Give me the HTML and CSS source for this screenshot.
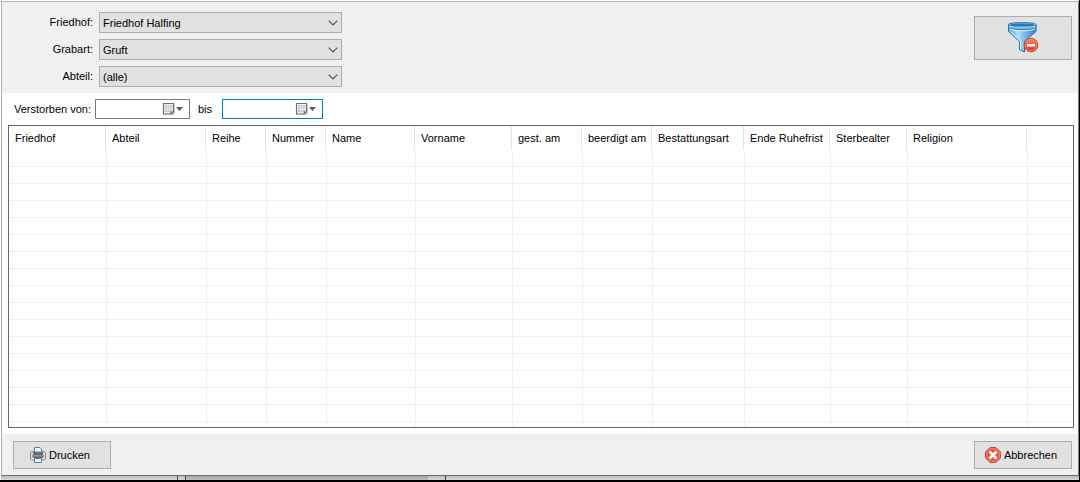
FILE: index.html
```html
<!DOCTYPE html>
<html lang="de">
<head>
<meta charset="utf-8">
<title>Friedhof</title>
<link rel="stylesheet" href="styles.css">
</head>
<body>
<div class="window">
  <header class="filters">
    <div class="fields">
      <label for="friedhof">Friedhof:</label>
      <div class="combo">
        <select id="friedhof"><option>Friedhof Halfing</option></select>
        <svg class="chevron" viewBox="0 0 10 6"><path d="M.7.7 5 5 9.3.7"/></svg>
      </div>
      <label for="grabart">Grabart:</label>
      <div class="combo">
        <select id="grabart"><option>Gruft</option></select>
        <svg class="chevron" viewBox="0 0 10 6"><path d="M.7.7 5 5 9.3.7"/></svg>
      </div>
      <label for="abteil">Abteil:</label>
      <div class="combo">
        <select id="abteil"><option>(alle)</option></select>
        <svg class="chevron" viewBox="0 0 10 6"><path d="M.7.7 5 5 9.3.7"/></svg>
      </div>
    </div>
    <button class="button reset" type="button" aria-label="Filter entfernen">
      <svg width="32" height="32" viewBox="0 0 32 32">
        <defs>
          <linearGradient id="cone" x1="0" x2="1"><stop offset="0" stop-color="#4d9fd6"/><stop offset=".35" stop-color="#b5dff8"/><stop offset=".6" stop-color="#74b9e6"/><stop offset="1" stop-color="#3585c4"/></linearGradient>
          <linearGradient id="minus" x1="0" x2="0" y1="0" y2="1"><stop offset="0" stop-color="#ff8468"/><stop offset="1" stop-color="#dd3018"/></linearGradient>
        </defs>
        <path d="M1.500 4v6.500L12.500 20.500v8l5 2.500V20.500L29 10.500V4z" fill="url(#cone)" stroke="#2877b5"/>
        <path d="M3 10.500 13.500 20v8.500" fill="none" stroke="#d5effc"/>
        <path d="M1.500 3.500C1.500 1 29 1 29 3.500V6.500C29 9 1.500 9 1.500 6.500z" fill="#86c6ee" stroke="#2472ad"/>
        <ellipse cx="15.200" cy="4" rx="12.500" ry="1.600" fill="#2f78b0"/>
        <path d="M2.500 8C9 10.500 22 10.500 28 8" fill="none" stroke="#d9f1fd"/>
        <circle cx="24" cy="24" r="6.800" fill="url(#minus)" stroke="#c33b27"/>
        <circle cx="24" cy="24" r="5.800" fill="none" stroke="#ff9a82" stroke-width=".7"/>
        <path d="M20 23h8v2.500h-8z" fill="#fff"/>
      </svg>
    </button>
  </header>

  <main class="content">
    <div class="dates">
      <label for="von">Verstorben von:</label>
      <div class="date date-from">
        <input id="von" type="text">
        <button type="button" aria-label="Kalender">
          <svg width="22" height="14" viewBox="0 0 22 14"><path d="M2.500 2.500h10.500v9l-1.500 1.500h-9z" fill="#aaa" opacity=".5"/><path d="M1.500 1.500h10v8.500l-2 2h-8z" fill="#f4f4f6" stroke="#786b6b" stroke-width="1.200"/><path d="M3 3h7v7H3z" fill="#b9c3cf"/><path d="M3 5.200h7M3 7.500h7M5.200 3v7M7.700 3v7" stroke="#f0f3f6" stroke-width=".7"/><path d="M8.500 12V9.500h3z" fill="#786b6b"/><path d="M14 5h7l-3.500 4z" fill="#49597d"/></svg>
        </button>
      </div>
      <label class="until" for="bis">bis</label>
      <div class="date date-to">
        <input id="bis" type="text">
        <button type="button" aria-label="Kalender">
          <svg width="22" height="14" viewBox="0 0 22 14"><path d="M2.500 2.500h10.500v9l-1.500 1.500h-9z" fill="#aaa" opacity=".5"/><path d="M1.500 1.500h10v8.500l-2 2h-8z" fill="#f4f4f6" stroke="#786b6b" stroke-width="1.200"/><path d="M3 3h7v7H3z" fill="#b9c3cf"/><path d="M3 5.200h7M3 7.500h7M5.200 3v7M7.700 3v7" stroke="#f0f3f6" stroke-width=".7"/><path d="M8.500 12V9.500h3z" fill="#786b6b"/><path d="M14 5h7l-3.500 4z" fill="#49597d"/></svg>
        </button>
      </div>
    </div>

    <div class="list">
      <table>
        <colgroup>
          <col class="w98"><col class="w100"><col class="w60"><col class="w60"><col class="w89"><col class="w97"><col class="w70"><col class="w70"><col class="w92"><col class="w86"><col class="w77"><col class="w120"><col>
        </colgroup>
        <thead>
          <tr><th>Friedhof</th><th>Abteil</th><th>Reihe</th><th>Nummer</th><th>Name</th><th>Vorname</th><th>gest. am</th><th>beerdigt am</th><th>Bestattungsart</th><th>Ende Ruhefrist</th><th>Sterbealter</th><th>Religion</th><td></td></tr>
        </thead>
        <tbody id="rows"></tbody>
      </table>
    </div>
  </main>

  <footer class="actions">
    <button class="button" type="button">
      <svg width="16" height="16" viewBox="0 0 16 16"><path d="M1.500 4.500h13l1 1.500v6l-1 1h-13l-1-1V6z" fill="#dadada" stroke="#8f8f8f"/><path d="M3 5h10v3H3z" fill="#6c6c6c"/><path d="M2 8h12v2H2z" fill="#929292"/><path d="M4.500.5h5.500l1.500 1.500v3h-7z" fill="#f2f9ff" stroke="#4b87b8"/><path d="M3 9.500h10V11H3z" fill="#686868"/><path d="M4.500 11.500h7v4h-7z" fill="#e3f1fc" stroke="#4b87b8"/></svg>
      Drucken
    </button>
    <button class="button" type="button">
      <svg width="16" height="16" viewBox="0 0 16 16"><path d="M5 .7h6L15.300 5v6L11 15.300H5L.7 11V5z" fill="#ee543d" stroke="#b63b2b"/><path d="M5.400 1.700h5.200l3.700 3.700v5.200l-3.700 3.700H5.400l-3.700-3.700V5.400z" fill="none" stroke="#ff9a86" stroke-width=".8"/><path d="m4.500 4.500 7 7M11.500 4.500l-7 7" stroke="#fff" stroke-width="2.600"/></svg>
      Abbrechen
    </button>
  </footer>
</div>
<div class="backdrop"><span class="seg-a"></span><span class="seg-b"></span><span class="seg-c"></span><span class="seg-d"></span><span class="seg-e"></span></div>
<script src="rows.js"></script>
</body>
</html>
```
FILE: styles.css
```css
* { box-sizing: border-box; }

body {
  margin: 0;
  height: 100vh;
  display: flex;
  flex-direction: column;
  padding: 1px 0 0 1px;
  border-right: 1px solid #000;
  border-bottom: 2px solid #000;
  background: #fff;
  color: #000;
  font: 11px/14px "Liberation Sans", Arial, sans-serif;
}

button, input, select { font: inherit; color: inherit; }
svg { display: block; flex: none; }

.window {
  flex: 1;
  min-height: 0;
  display: flex;
  flex-direction: column;
  border: 1px solid #b4b4b4;
  border-right-color: #808080;
  border-bottom-color: #6e6e6e;
}

.filters {
  display: flex;
  justify-content: space-between;
  align-items: flex-start;
  padding: 10px 6px 6px 12px;
  background: #f0f0f0;
}

.fields {
  display: grid;
  grid-template-columns: 79px 243px;
  column-gap: 6px;
  row-gap: 6px;
}
.fields label { text-align: right; padding-top: 3px; }

.combo { display: grid; align-items: center; }
.combo > * { grid-area: 1 / 1; }
.combo select {
  appearance: none;
  width: 100%;
  height: 21px;
  padding: 0 3px;
  border: 1px solid #adadad;
  border-radius: 0;
  background: #e1e1e1;
}
.chevron {
  width: 10px;
  height: 6px;
  margin-right: 4px;
  justify-self: end;
  pointer-events: none;
  fill: none;
  stroke: #505050;
  stroke-width: 1.2;
}

.button {
  display: flex;
  align-items: center;
  justify-content: center;
  gap: 3px;
  width: 98px;
  height: 28px;
  padding: 0 4px 0 0;
  border: 1px solid #adadad;
  background: #e1e1e1;
}
.reset { height: 44px; margin-top: 4px; padding: 0 0 2px; }

.content {
  flex: 1;
  min-height: 0;
  display: flex;
  flex-direction: column;
  gap: 6px;
  padding: 6px 4px 6px 6px;
}

.dates { display: flex; align-items: center; padding-left: 6px; }
.dates label { width: 81px; }
.dates .until { width: 32px; padding-left: 8px; }
.date {
  display: flex;
  align-items: center;
  height: 20px;
  border: 1px solid #7a7a7a;
}
.date-from { width: 95px; }
.date-to { width: 101px; border-color: #0078d7; }
.date input {
  flex: 1;
  min-width: 0;
  height: 18px;
  padding: 0 3px;
  border: 0;
  outline: 0;
  background: transparent;
}
.date button { padding: 0 5px 0 0; border: 0; background: none; }

.list {
  flex: 1;
  min-height: 0;
  overflow: hidden;
  border: 1px solid #646464;
}
table {
  width: 100%;
  table-layout: fixed;
  border-collapse: separate;
  border-spacing: 0;
}
th {
  height: 24px;
  padding: 0 0 0 5px;
  border-right: 1px solid transparent;
  background: linear-gradient(#e5e5e5, #e5e5e5) right / 1px 100% no-repeat padding-box;
  font-weight: 400;
  text-align: left;
  white-space: nowrap;
}
th:first-child { padding-left: 6px; }
tbody td {
  height: 17px;
  padding: 0;
  border-right: 1px solid #f0f0f0;
  border-bottom: 1px solid #f0f0f0;
}
tbody td:last-child { border-right: 0; }

.w60 { width: 60px; }
.w70 { width: 70px; }
.w77 { width: 77px; }
.w86 { width: 86px; }
.w89 { width: 89px; }
.w92 { width: 92px; }
.w97 { width: 97px; }
.w98 { width: 98px; }
.w100 { width: 100px; }
.w120 { width: 120px; }

.actions {
  display: flex;
  justify-content: space-between;
  padding: 7px 6px 6px 11px;
  background: #f0f0f0;
}

.backdrop {
  display: flex;
  height: 4px;
  background: linear-gradient(#bcbcbc, #d6d6d6);
}
.seg-a { width: 177px; border-right: 1px solid #505050; }
.seg-b { width: 8px; border-right: 1px solid #505050; }
.seg-c { width: 242px; background: linear-gradient(#a8a8a8, #bababa); }
.seg-d { width: 17px; }
.seg-e { flex: 1; border-left: 1px solid #404040; }
```
FILE: rows.js
```js
const body = document.getElementById('rows');
for (let r = 0; r < 17; r++) {
  const row = body.insertRow();
  for (let c = 0; c < 13; c++) row.insertCell();
}
```
